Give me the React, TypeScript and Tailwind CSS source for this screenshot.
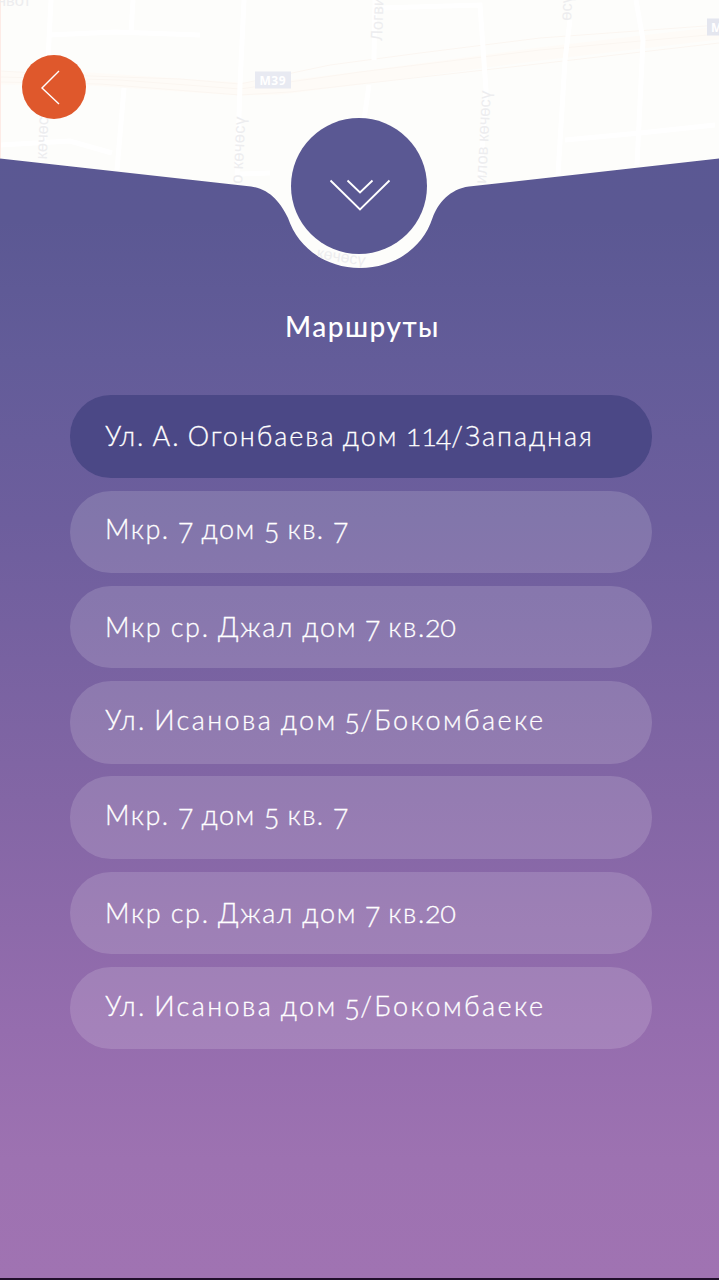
import { Fragment } from "react";

type Route = { label: string; labelClass: string; active?: boolean };

const routes: Route[] = [
  { label: "Ул. А. Огонбаева дом 114/Западная", labelClass: "pt-[24px] tracking-[1.95px] [word-spacing:-2px]", active: true },
  { label: "Мкр. 7 дом 5 кв. 7", labelClass: "pt-[21px] tracking-[1.5px]" },
  { label: "Мкр ср. Джал дом 7 кв.20", labelClass: "pt-[24px] tracking-[1.67px] [word-spacing:-0.6px]" },
  { label: "Ул. Исанова дом 5/Бокомбаеке", labelClass: "pt-[22px] tracking-[2.4px] [word-spacing:-2.2px]" },
  { label: "Мкр. 7 дом 5 кв. 7", labelClass: "pt-[22px] tracking-[1.5px]" },
  { label: "Мкр ср. Джал дом 7 кв.20", labelClass: "pt-[24px] tracking-[1.67px] [word-spacing:-0.6px]" },
  { label: "Ул. Исанова дом 5/Бокомбаеке", labelClass: "pt-[22px] tracking-[2.4px] [word-spacing:-2.2px]" },
];

/* Old-style figures: 0, 1 and 2 are short, the others hang below the baseline. */
function Label({ text }: { text: string }) {
  return (
    <>
      {text.split(/(\d)/).map((part, i) => {
        if (part === "1") {
          return <span key={i} className="inline-block origin-[50%_79%] scale-y-[0.84] tracking-[-0.2px]">{part}</span>;
        }
        if (/^[02]$/.test(part)) {
          return <span key={i} className="-mx-[1px] inline-block origin-[50%_79%] scale-y-[0.86]">{part}</span>;
        }
        if (/^\d$/.test(part)) {
          return <span key={i} className="-mr-[2.2px] -ml-[0.8px] inline-block translate-y-[4px]">{part}</span>;
        }
        return <Fragment key={i}>{part}</Fragment>;
      })}
    </>
  );
}

function MapHeader() {
  return (
    <svg className="block h-[280px] w-full" viewBox="0 0 719 280" fill="none">
      <defs>
        <clipPath id="area">
          <path d="M0 0H719V158.500L469 186.500C450 189 438 203 432.500 218C423 248 394 268 360 268C326 268 298 248 288 218C281 203 270 189 251 186.500L0 158.500Z" />
        </clipPath>
      </defs>
      <g clipPath="url(#area)">
        <rect width="719" height="280" fill="#fdfdfb" />
        <g stroke="#fefbf7" strokeWidth="13">
          <path d="M0 78L90 79L180 85L240 89L280 88L360 78L540 54L719 33" />
        </g>
        <g stroke="#fbf6f1" strokeWidth="1">
          <path d="M0 71L90 76L180 79L240 84L330 65L420 53L540 38L719 25" />
          <path d="M0 82L100 84L240 95L290 92L360 84L520 66L719 43" />
          <path d="M0 77L120 80L240 89L360 72L540 50L719 34" />
        </g>
        <g stroke="#ffffff" strokeWidth="5">
          <path d="M51 0L48 60L42 160M133 0L131 34M49 35L115 32L200 35M244 0L240 85L237 180M124 88L117 170M0 145L70 141L112 153M375 0L374 60M369 85L364 120M380 8L480 5L486 90L480 180M570 20L565 60L558 175M636 0L643 40L637 165M565 140L640 133L715 125M240 174L270 173" />
        </g>
        <path d="M.5 0V158" stroke="#fdebe6" />
        <g fontFamily="Liberation Sans" fill="#ededef" fontSize="16.500">
          <text x="-3" y="6">нвот</text>
          <text transform="translate(46 182) rotate(-88)">ов көчөсү</text>
          <text transform="translate(242 184) rotate(-87)" textLength="67">о көчөсү</text>
          <text transform="translate(382 41) rotate(-88)">Логвиненко</text>
          <text transform="translate(486 184) rotate(-87)" textLength="93">илов көчөсү</text>
          <text transform="translate(571 21) rotate(-87)">өсү</text>
          <text transform="translate(316 258) rotate(9)" fontSize="16">көчөсү</text>
        </g>
        <rect x="255" y="71.500" width="36" height="17" fill="#e8eaf2" />
        <rect x="707" y="18.500" width="36" height="17" fill="#e4e6ef" />
        <g fontFamily="Open Sans" fontWeight="700" fontSize="12" fill="#fff">
          <text x="259.500" y="84.500" textLength="26">M39</text>
          <text x="711" y="31.500">M39</text>
        </g>
      </g>
    </svg>
  );
}

export default function App() {
  return (
    <main className="flex h-[1280px] w-[719px] flex-col overflow-hidden border-b-2 border-[#210f2b] bg-[linear-gradient(180deg,#5a5893_0px,#5b5893_220px,#635c99_360px,#6d5e9d_520px,#8366a5_800px,#956dae_1030px,#9d72b1_1160px,#a073b2_1278px)] font-['Lato','Open_Sans',sans-serif] text-white">
      <header className="relative h-[280px] shrink-0">
        <MapHeader />
        <button aria-label="Назад" className="absolute left-[22px] top-[55px] size-[64px] rounded-full bg-[#df582c]">
          <svg className="size-full" viewBox="0 0 64 64" fill="none" stroke="#fff" strokeWidth="1.400">
            <path d="M37 16L20 33L37 49" />
          </svg>
        </button>
        <button aria-label="Свернуть" className="absolute left-[291px] top-[118px] size-[136px] rounded-full bg-[#5a5893]">
          <svg className="size-full" viewBox="0 0 136 136" fill="none" stroke="#fff" strokeWidth="1.900">
            <path d="M39.500 62.500L69 91.500L98.500 62.500M56.500 62.500L69 74.500L81.500 62.500" />
          </svg>
        </button>
      </header>
      <h1 className="mt-[29px] h-[36px] pl-[6px] text-center text-[28px] font-medium leading-[34px] tracking-[1.5px]">Маршруты</h1>
      <ul className="ml-[70px] mt-[50.400px] flex w-[582px] flex-col gap-[12.750px]">
        {routes.map((r, i) => (
          <li key={i} className={r.active ? "h-[82.500px] rounded-[41px] bg-[#4b4886]" : "h-[82.500px] rounded-[41px] bg-white/15"}>
            <button className={`block w-full whitespace-nowrap pl-[35px] text-left text-[27px] font-light leading-[34px] [-webkit-text-stroke:0.3px_white] ${r.labelClass}`}>
              <Label text={r.label} />
            </button>
          </li>
        ))}
      </ul>
    </main>
  );
}
